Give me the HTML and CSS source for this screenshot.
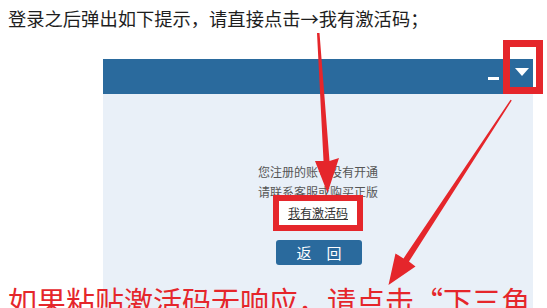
FILE: index.html
```html
<!DOCTYPE html>
<html lang="zh-CN">
<head>
<meta charset="utf-8">
<title>激活码提示</title>
<link rel="stylesheet" href="styles.css">
</head>
<body>
<div class="page">
  <p class="intro">登录之后弹出如下提示，请直接点击→我有激活码；</p>
  <div class="dialog">
    <div class="dialog-head">
      <span class="minimize"></span>
      <span class="dropdown"><span class="tri"></span></span>
    </div>
    <div class="dialog-body">
      <p class="msg">您注册的账号没有开通</p>
      <p class="msg">请联系客服或购买正版</p>
      <p class="link-row"><a class="link">我有激活码</a></p>
      <div class="btn-row"><span class="btn">返　回</span></div>
    </div>
  </div>
  <p class="caption">如果粘贴激活码无响应，请点击“下三角</p>
  <svg class="marks" width="547" height="308" viewBox="0 0 547 308">
    <rect x="506.5" y="43.5" width="33" height="47" fill="none" stroke="#e5262b" stroke-width="7"/>
    <polygon fill="#e5262b" points="317,33 319.5,33 329.5,161 339,158 327.5,193 315,161 323.5,161"/>
    <polygon fill="#e5262b" points="510.5,99.7 511.8,100.4 409,261.5 415.5,266.6 388.5,285 395.5,253.4 403.5,258.4"/>
  </svg>
</div>
</body>
</html>
```

FILE: styles.css
```css
html, body {
  margin: 0;
  padding: 0;
  background: #ffffff;
}
.page {
  position: relative;
  width: 547px;
  height: 308px;
  overflow: hidden;
  font-family: "Noto Sans CJK SC", "Noto Sans", sans-serif;
}
.intro {
  margin: 0;
  padding: 6px 0 0 8px;
  font-size: 18.3px;
  line-height: 24px;
  color: #1e1e1e;
  white-space: nowrap;
}
.dialog {
  margin: 29px 0 0 103px;
  width: 430px;
}
.dialog-head {
  height: 35px;
  background: #2a6a9d;
  display: flex;
  justify-content: flex-end;
  align-items: stretch;
}
.minimize {
  width: 11px;
  height: 3px;
  background: #ffffff;
  margin: 18px 11px 0 0;
}
.dropdown {
  width: 23px;
  display: flex;
  justify-content: center;
  padding-top: 9px;
  box-sizing: border-box;
}
.tri {
  width: 0;
  height: 0;
  border-left: 7.5px solid transparent;
  border-right: 7.5px solid transparent;
  border-top: 8px solid #ffffff;
}
.dialog-body {
  height: 230px;
  background: #e9f0f8;
  padding-top: 68px;
  box-sizing: border-box;
  text-align: center;
}
.msg {
  margin: 0;
  font-size: 12px;
  line-height: 20px;
  color: #555555;
}
.link-row {
  position: relative;
  margin: -7px auto 0;
  width: 78px;
  height: 24px;
  border: 6px solid #e5262b;
  background: #ffffff;
  font-size: 12px;
  line-height: 24px;
}
.link-row .link {
  color: #333333;
  text-decoration: underline;
}
.btn-row {
  margin-top: 9px;
  display: flex;
  justify-content: center;
}
.btn {
  width: 86px;
  height: 25px;
  margin-left: 2px;
  background: #2a6a9d;
  border-radius: 3px;
  color: #ffffff;
  font-size: 15px;
  line-height: 25px;
  text-align: center;
}
.caption {
  position: absolute;
  left: 8px;
  top: 286px;
  margin: 0;
  font-size: 29px;
  line-height: 29px;
  color: #e5262b;
  white-space: nowrap;
}
.marks {
  position: absolute;
  left: 0;
  top: 0;
  pointer-events: none;
}
```
